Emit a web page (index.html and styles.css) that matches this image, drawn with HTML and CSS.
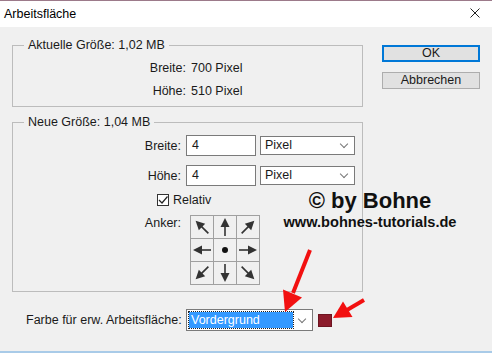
FILE: index.html
```html
<!DOCTYPE html>
<html lang="de">
    <head>
        <meta charset="UTF-8" />
        <title>Arbeitsfläche</title>
        <link rel="stylesheet" href="styles.css">
    </head>
    <body>
        <div class="window">
            <div class="titlebar">
                <span>Arbeitsfläche</span>
                <svg class="close" width="10" height="10" viewBox="0 0 10 10">
                    <path d="M0.5 0.5 L9.5 9.5 M9.5 0.5 L0.5 9.5" stroke="#222" stroke-width="1" />
                </svg>
            </div>

            <div class="content">
                <div class="left">
                    <!-- current size -->
                    <fieldset class="group group-current">
                        <legend>Aktuelle Größe: 1,02 MB</legend>
                        <div class="info-row">
                            <span class="label">Breite:</span>
                            <span>700 Pixel</span>
                        </div>
                        <div class="info-row">
                            <span class="label">Höhe:</span>
                            <span>510 Pixel</span>
                        </div>
                    </fieldset>

                    <!-- new size -->
                    <fieldset class="group group-new">
                        <legend>Neue Größe: 1,04 MB</legend>
                        <div class="field-row">
                            <span class="label">Breite:</span>
                            <div class="input">4</div>
                            <div class="select">Pixel<span class="chev"></span></div>
                        </div>
                        <div class="field-row">
                            <span class="label">Höhe:</span>
                            <div class="input">4</div>
                            <div class="select">Pixel<span class="chev"></span></div>
                        </div>
                        <div class="check-row">
                            <span class="checkbox">
                                <svg width="10" height="10" viewBox="0 0 10 10">
                                    <path d="M1 5 L4 8 L9.5 1.5" fill="none" stroke="#222" stroke-width="1.2" />
                                </svg>
                            </span>
                            <span>Relativ</span>
                        </div>
                        <div class="anchor-row">
                            <span class="label">Anker:</span>
                            <div class="anchor-grid">
                                <div class="cell"><svg viewBox="0 0 22 22"><g transform="rotate(-135 11 11)"><line x1="2" y1="11" x2="13" y2="11" /><path d="M20 11 L11 6.5 L11 15.5 Z" /></g></svg></div>
                                <div class="cell"><svg viewBox="0 0 22 22"><g transform="rotate(-90 11 11)"><line x1="2" y1="11" x2="13" y2="11" /><path d="M20 11 L11 6.5 L11 15.5 Z" /></g></svg></div>
                                <div class="cell"><svg viewBox="0 0 22 22"><g transform="rotate(-45 11 11)"><line x1="2" y1="11" x2="13" y2="11" /><path d="M20 11 L11 6.5 L11 15.5 Z" /></g></svg></div>
                                <div class="cell"><svg viewBox="0 0 22 22"><g transform="rotate(180 11 11)"><line x1="2" y1="11" x2="13" y2="11" /><path d="M20 11 L11 6.5 L11 15.5 Z" /></g></svg></div>
                                <div class="cell"><svg viewBox="0 0 22 22"><circle cx="11" cy="11" r="3" fill="#111" /></svg></div>
                                <div class="cell"><svg viewBox="0 0 22 22"><g><line x1="2" y1="11" x2="13" y2="11" /><path d="M20 11 L11 6.5 L11 15.5 Z" /></g></svg></div>
                                <div class="cell"><svg viewBox="0 0 22 22"><g transform="rotate(135 11 11)"><line x1="2" y1="11" x2="13" y2="11" /><path d="M20 11 L11 6.5 L11 15.5 Z" /></g></svg></div>
                                <div class="cell"><svg viewBox="0 0 22 22"><g transform="rotate(90 11 11)"><line x1="2" y1="11" x2="13" y2="11" /><path d="M20 11 L11 6.5 L11 15.5 Z" /></g></svg></div>
                                <div class="cell"><svg viewBox="0 0 22 22"><g transform="rotate(45 11 11)"><line x1="2" y1="11" x2="13" y2="11" /><path d="M20 11 L11 6.5 L11 15.5 Z" /></g></svg></div>
                            </div>
                        </div>
                    </fieldset>

                    <div class="color-row">
                        <span class="label">Farbe für erw. Arbeitsfläche:</span>
                        <div class="select select-color">
                            <span class="selected">Vordergrund</span>
                            <span class="chev"></span>
                        </div>
                        <span class="swatch"></span>
                    </div>
                </div>

                <div class="buttons">
                    <div class="button default">OK</div>
                    <div class="button">Abbrechen</div>
                </div>
            </div>

            <!-- watermark -->
            <div class="watermark">
                <div class="wm-big">© by Bohne</div>
                <div class="wm-small">www.bohnes-tutorials.de</div>
            </div>

            <!-- red arrows -->
            <svg class="arrows" width="492" height="353" viewBox="0 0 492 353">
                <line x1="310" y1="250" x2="293" y2="293" stroke="#f21010" stroke-width="4" />
                <path d="M285 312 L283 289.5 L302 297.5 Z" fill="#f21010" />
                <line x1="364" y1="300" x2="347" y2="310" stroke="#f21010" stroke-width="4" />
                <path d="M333 318 L343 301.5 L352.5 317 Z" fill="#f21010" />
            </svg>
        </div>
    </body>
</html>
```

FILE: styles.css
```css
* {
    box-sizing: border-box;
}

body {
    margin: 0;
    background-color: #f0f0f0;
    font-family: "Liberation Sans", Arial, sans-serif;
    font-size: 12.5px;
    color: #1a1a1a;
    overflow: hidden;
}

.window {
    position: relative;
    width: 492px;
    height: 353px;
    border-top: 1px solid #9c7a8a;
    border-bottom: 2px solid #a9cbe8;
}

.titlebar {
    height: 26px;
    background-color: #fff;
    display: flex;
    justify-content: space-between;
    align-items: center;
    padding: 0 12px 0 4px;
    color: #000;
}

.close {
    display: block;
    margin-top: -2px;
}

.content {
    display: flex;
    padding: 11px 0 0 12px;
}

.left {
    width: 351px;
}

/* group boxes */
.group {
    margin: 0;
    padding: 0;
    border: 1px solid #bcbcbc;
    min-width: 0;
}

.group legend {
    margin-left: 11px;
    padding: 0 4px;
    line-height: 14px;
}

.group-current {
    height: 69px;
    padding-top: 4px;
}

.info-row {
    display: flex;
    gap: 5px;
    height: 23px;
    align-items: center;
}

.info-row .label {
    width: 173px;
    text-align: right;
}

.group-new {
    margin-top: 8px;
    height: 177px;
    padding-top: 6px;
}

.field-row {
    display: flex;
    align-items: center;
    height: 21px;
    margin-bottom: 9px;
}

.field-row .label,
.anchor-row .label {
    width: 168px;
    text-align: right;
    margin-right: 5px;
}

.input {
    width: 70px;
    height: 21px;
    border: 1px solid #7a7a7a;
    background-color: #fff;
    padding: 2px 0 0 5px;
}

.select {
    position: relative;
    width: 95px;
    height: 19px;
    margin-left: 4px;
    border: 1px solid #7a7a7a;
    background-color: #fff;
    padding: 1px 0 0 4px;
}

.chev {
    position: absolute;
    right: 7px;
    top: 4px;
    width: 6px;
    height: 6px;
    border-right: 1px solid #777;
    border-bottom: 1px solid #777;
    transform: rotate(45deg);
}

.check-row {
    display: flex;
    align-items: center;
    gap: 4px;
    margin: -2px 0 0 144px;
    height: 14px;
}

.checkbox {
    width: 12px;
    height: 12px;
    border: 1px solid #333;
    background-color: #fff;
    display: flex;
    align-items: center;
    justify-content: center;
}

.anchor-row {
    display: flex;
    margin-top: 8px;
}

.anchor-row .label {
    padding-top: 1px;
}

.anchor-grid {
    margin-left: 4px;
    display: grid;
    grid-template-columns: repeat(3, 23px);
    grid-template-rows: repeat(3, 23px);
    border-left: 1px solid #a0a0a0;
    border-top: 1px solid #a0a0a0;
}

.cell {
    border-right: 1px solid #a0a0a0;
    border-bottom: 1px solid #a0a0a0;
}

.cell svg {
    display: block;
    width: 22px;
    height: 22px;
}

.cell line {
    stroke: #333;
    stroke-width: 1.6;
}

.cell path {
    fill: #333;
}

/* bottom colour row */
.color-row {
    display: flex;
    align-items: center;
    margin-top: 17px;
    height: 22px;
}

.color-row .label {
    width: 174px;
    padding-left: 14px;
    white-space: nowrap;
}

.select-color {
    width: 127px;
    height: 22px;
    margin-left: 0;
    padding: 2px;
}

.selected {
    display: block;
    width: 104px;
    height: 16px;
    background-color: #3399ff;
    color: #fff;
    outline: 1px dotted #222;
    padding: 1px 0 0 2px;
    line-height: 14px;
}

.select-color .chev {
    top: 6px;
}

.swatch {
    width: 14px;
    height: 13px;
    margin-left: 5px;
    background-color: #8b1b2b;
    border: 1px solid #6d1420;
}

/* buttons */
.buttons {
    display: flex;
    flex-direction: column;
    gap: 10px;
    margin-left: 19px;
    padding-top: 7px;
}

.button {
    width: 98px;
    height: 17px;
    background-color: #e1e1e1;
    border: 1px solid #adadad;
    text-align: center;
    line-height: 15px;
}

.button.default {
    border: 2px solid #0078d7;
    line-height: 13px;
}

/* watermark */
.watermark {
    position: absolute;
    left: 270px;
    top: 187px;
    width: 200px;
    text-align: center;
    font-weight: bold;
    color: #111;
}

.wm-big {
    font-size: 22px;
    line-height: 25px;
}

.wm-small {
    font-size: 14.6px;
    line-height: 18px;
}

.arrows {
    position: absolute;
    left: 0;
    top: -1px;
}
```
